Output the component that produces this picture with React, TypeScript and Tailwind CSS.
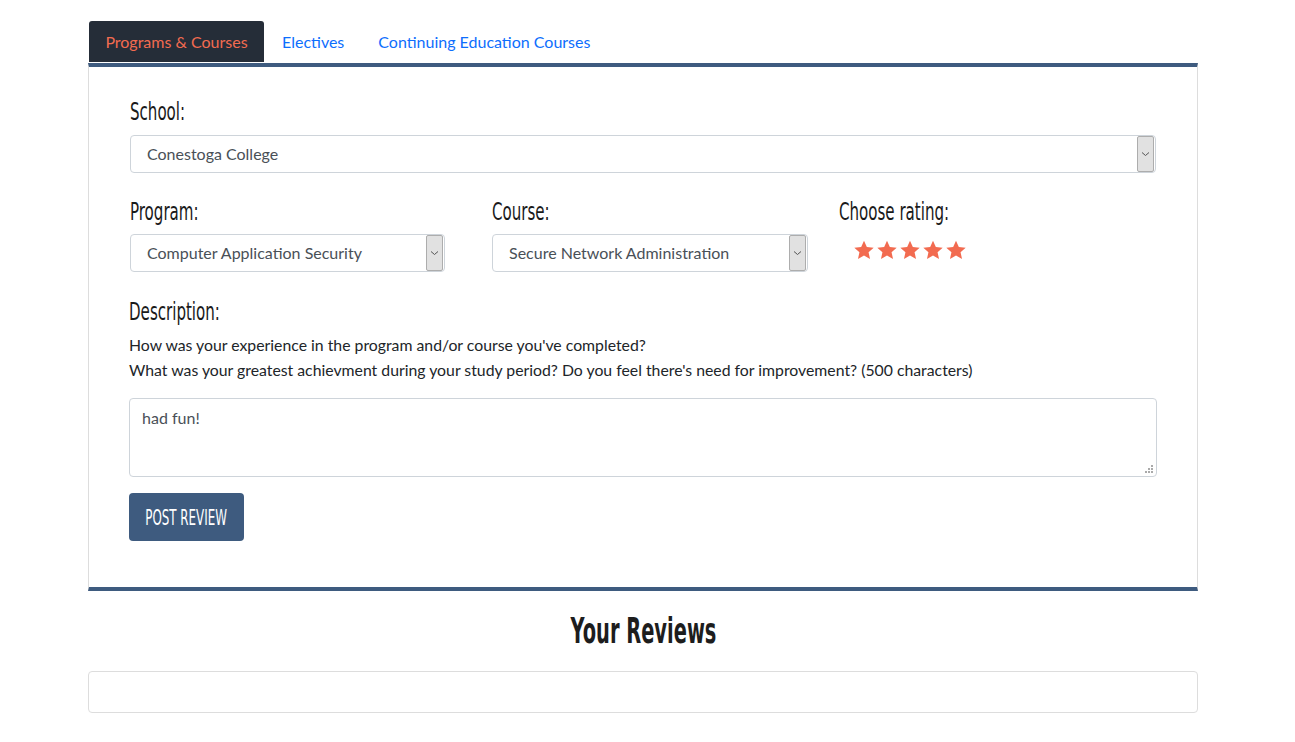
import React from "react";

const cond = "font-['DejaVu_Sans_Condensed','Liberation_Sans_Narrow',sans-serif]";

function Label({ children, className = "" }: { children: React.ReactNode; className?: string }) {
  return (
    <div className={`h-[30px] leading-[30px] text-[25px] text-[#1a1a1a] ${cond} ${className}`}>
      <span className="inline-block origin-left scale-x-[0.67] whitespace-nowrap">{children}</span>
    </div>
  );
}

function Select({ value, className = "" }: { value: string; className?: string }) {
  return (
    <div className={`h-[38px] border border-[#ced4da] rounded-[4px] bg-white flex items-center justify-between pl-[16px] pr-px ${className}`}>
      <span className="text-[16px] text-[#495057]">{value}</span>
      <div className="w-[17px] h-[36px] bg-[#e1e1e1] border border-[#adadad] rounded-[2px] flex items-center justify-center">
        <svg width="9" height="6" viewBox="0 0 9 6">
          <path d="M1 1.5 L4.5 4.5 L8 1.5" fill="none" stroke="#555" strokeWidth="1" />
        </svg>
      </div>
    </div>
  );
}

function Star() {
  return (
    <svg width="22" height="21" viewBox="0 0 24 23">
      <path
        d="M12 0.8 L15.1 7.6 L22.6 8.4 L17 13.4 L18.6 20.8 L12 17 L5.4 20.8 L7 13.4 L1.4 8.4 L8.9 7.6 Z"
        fill="#f26b50"
      />
    </svg>
  );
}

export default function App() {
  return (
    <div className="min-h-[742px] bg-white font-['Lato','Liberation_Sans',sans-serif]">
      <div className="ml-[88px] w-[1110px] pt-[21px]">
        {/* Tabs */}
        <div className="flex items-end h-[41px] text-[16px]">
          <div className="h-[41px] w-[175px] ml-px bg-[#252d38] rounded-t-[3px] flex items-center justify-center text-[#f26b50]">
            Programs &amp; Courses
          </div>
          <div className="h-[41px] flex items-center pl-[18px] text-[#0d6efd]">Electives</div>
          <div className="h-[41px] flex items-center pl-[34px] text-[#0d6efd]">Continuing Education Courses</div>
        </div>
        {/* Panel */}
        <div className="mt-px border-t-4 border-b-4 border-t-[#3e5b7f] border-b-[#3e5b7f] border-x border-x-[#dddddd] px-[41px] pt-[30px] pb-[46px]">
          <Label>School:</Label>
          <Select value="Conestoga College" className="mt-[8px]" />
          <div className="flex mt-[24px]">
            <div className="w-[362px]">
              <Label>Program:</Label>
              <Select value="Computer Application Security" className="w-[315px] mt-[7px]" />
            </div>
            <div className="w-[347px]">
              <Label>Course:</Label>
              <Select value="Secure Network Administration" className="w-[316px] mt-[7px]" />
            </div>
            <div>
              <Label>Choose rating:</Label>
              <div className="flex ml-[14px] mt-[13px] gap-[1px]">
                <Star />
                <Star />
                <Star />
                <Star />
                <Star />
              </div>
            </div>
          </div>
          <Label className="mt-[25px] -ml-px">Description:</Label>
          <div className="-ml-px mt-[5px] text-[15.8px] leading-[25px] text-[#212529]">
            <div>How was your experience in the program and/or course you've completed?</div>
            <div>What was your greatest achievment during your study period? Do you feel there's need for improvement? (500 characters)</div>
          </div>
          <div className="-mx-px mt-[16px] h-[79px] border border-[#ced4da] rounded-[4px] relative px-[12px] pt-[7px] text-[16px] text-[#495057]">
            had fun!
            <svg className="absolute right-[3px] bottom-[3px]" width="8" height="8" viewBox="0 0 8 8">
              <rect x="6" y="0" width="2" height="2" fill="#aaa" />
              <rect x="3" y="3" width="2" height="2" fill="#aaa" />
              <rect x="6" y="3" width="2" height="2" fill="#aaa" />
              <rect x="0" y="6" width="2" height="2" fill="#aaa" />
              <rect x="3" y="6" width="2" height="2" fill="#aaa" />
              <rect x="6" y="6" width="2" height="2" fill="#aaa" />
            </svg>
          </div>
          <div className="-ml-px mt-[16px] w-[115px] h-[48px] bg-[#3e5b7f] rounded-[4px] flex items-center justify-center">
            <span className={`text-white text-[22px] ${cond} inline-block scale-x-[0.6] whitespace-nowrap`}>POST REVIEW</span>
          </div>
        </div>
        <div className="h-[80px] flex items-center justify-center">
          <span className={`text-[36px] font-bold text-[#1d1d1d] ${cond} inline-block scale-x-[0.6] whitespace-nowrap`}>Your Reviews</span>
        </div>
        <div className="h-[42px] border border-[#dddddd] rounded-[4px]" />
      </div>
    </div>
  );
}
